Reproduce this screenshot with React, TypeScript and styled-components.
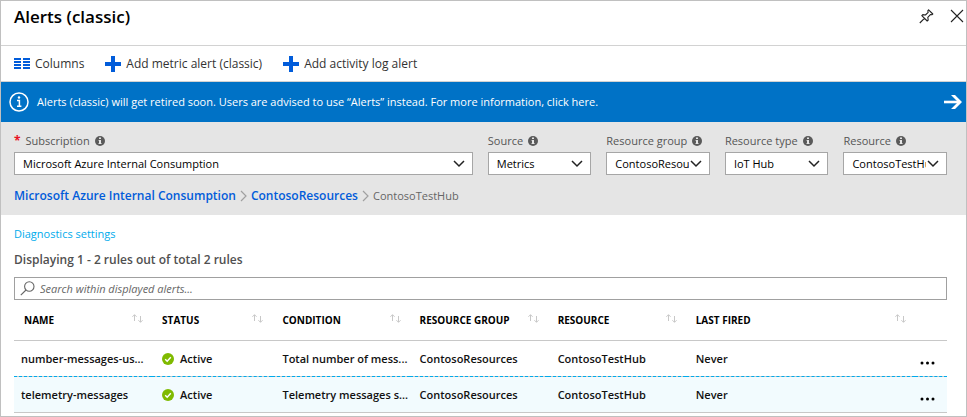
import React, { useState } from 'react';
import styled, { createGlobalStyle } from 'styled-components';

const GlobalStyle = createGlobalStyle`
  *, *::before, *::after { box-sizing: border-box; }
  body {
    margin: 0;
    background: #fff;
    color: #000;
    font-family: "Open Sans", "Noto Sans", sans-serif;
    font-size: 11px;
    line-height: 16px;
  }
  button, input, select { font: inherit; color: inherit; }
  button { border: 0; padding: 0; background: none; cursor: pointer; }
  a { text-decoration: none; }
  svg { display: block; flex: none; }
`;

const Blade = styled.main`
  border: 1px solid #c0c0c0;
  background: #fff;
  padding-bottom: 3px;
`;

const Header = styled.header`
  display: flex;
  align-items: flex-start;
  justify-content: space-between;
  height: 45px;
  padding: 4px 2px 0 13px;
  border-bottom: 1px solid #d2d2d2;
`;

const Title = styled.h1`
  margin: 0;
  font-size: 17px;
  line-height: 24px;
  font-weight: 600;
`;

const WindowButtons = styled.div`
  display: flex;
  gap: 16px;
  padding-top: 4px;
`;

const IconButton = styled.button`
  display: flex;
  color: #222;
`;

const Toolbar = styled.div`
  display: flex;
  align-items: center;
  gap: 21px;
  height: 36px;
  padding: 0 13px;
  border-bottom: 1px solid #d2d2d2;
`;

const ToolButton = styled.button`
  display: flex;
  align-items: center;
  gap: 5px;
  color: #333;
  font-size: 12px;
`;

const Banner = styled.a`
  display: flex;
  align-items: center;
  gap: 8px;
  height: 40px;
  padding: 0 4px 0 8px;
  background: #0072c6;
  color: #fff;
`;

const BannerText = styled.span`
  flex: 1;
`;

const FilterPanel = styled.section`
  background: #e5e5e5;
  padding: 11px 19px 11px 13px;
`;

const Filters = styled.div`
  display: grid;
  grid-template-columns: minmax(0, 443fr) repeat(4, minmax(0, 100fr));
  gap: 15px;
`;

const Field = styled.div`
  display: flex;
  flex-direction: column;
  gap: 3px;
`;

const FieldLabel = styled.label`
  display: flex;
  align-items: center;
  gap: 5px;
  color: #555;
  white-space: nowrap;
`;

const Required = styled.span`
  color: #e81123;
  font-size: 12px;
  font-weight: 700;
`;

const SelectBox = styled.div`
  display: grid;
  align-items: center;
  height: 23px;
  border: 1px solid #a6a6a6;
  background: #fff;

  & > * { grid-area: 1 / 1; }
  & > svg {
    justify-self: end;
    margin-right: 7px;
    pointer-events: none;
  }
`;

const Select = styled.select`
  appearance: none;
  width: 100%;
  height: 21px;
  margin: 0;
  padding: 0 20px 0 8px;
  border: 0;
  border-radius: 0;
  background: transparent;
  overflow: hidden;
  text-overflow: clip;
`;

const Breadcrumb = styled.nav`
  display: flex;
  align-items: center;
  gap: 4px;
  margin-top: 13px;
  color: #666;
`;

const Crumb = styled.a`
  color: #015cda;
  font-size: 12px;
  font-weight: 600;
`;

const Content = styled.section`
  padding: 11px 19px 0 13px;
`;

const SettingsLink = styled.a`
  display: block;
  width: fit-content;
  color: #00abec;
`;

const Summary = styled.p`
  margin: 10px 0 9px;
  color: #505050;
  font-size: 12px;
  font-weight: 600;
`;

const SearchBox = styled.label`
  display: flex;
  align-items: center;
  gap: 5px;
  height: 23px;
  padding-left: 5px;
  border: 1px solid #a0a0a0;
`;

const SearchInput = styled.input`
  flex: 1;
  height: 21px;
  padding: 0;
  border: 0;
  outline: 0;
  background: transparent;
  &::placeholder { color: #666; font-style: italic; opacity: 1; }
`;

const Table = styled.table`
  width: 100%;
  table-layout: fixed;
  border-collapse: separate;
  border-spacing: 0;
`;

const Col = styled.col<{ $share: number }>`
  width: ${(p) => p.$share}%;
`;

const HeadCell = styled.th`
  height: 41px;
  padding: 0 8px 0 10px;
  border-bottom: 1px solid #c8c8c8;
  font-size: 10px;
  font-weight: 700;
  text-align: left;
`;

const SortButton = styled.button`
  display: flex;
  align-items: center;
  justify-content: space-between;
  width: 100%;
  white-space: nowrap;

  & > svg { margin-bottom: 4px; }
`;

const Row = styled.tr<{ $selected?: boolean }>`
  background: ${(p) => (p.$selected ? '#f2fbfe' : '#fff')};
  & > td {
    border-bottom: 1px solid #c8c8c8;
  }
  &:not(:last-child) > td {
    border-bottom: 1px dashed #00abec;
    background: linear-gradient(#c8c8c8, #c8c8c8) bottom / 100% 1px no-repeat border-box;
  }
`;

const Cell = styled.td<{ $first?: boolean }>`
  height: 36px;
  padding: 0 0 0 ${(p) => (p.$first ? 7 : 10)}px;
  font-weight: 600;
  color: #111;
  white-space: nowrap;
`;

const Status = styled.span`
  display: flex;
  align-items: center;
  gap: 6px;
`;

const MoreCell = styled.td`
  padding: 8px 0 0 5px;
`;

const Columns = () => (
  <svg width="16" height="12" viewBox="0 0 16 12" fill="#015cda" aria-hidden="true">
    <path d="M0 0h7v2H0zM0 3h7v2H0zM0 6h7v2H0zM0 9h7v2H0zM9 0h7v2H9zM9 3h7v2H9zM9 6h7v2H9zM9 9h7v2H9z" />
  </svg>
);

const Plus = () => (
  <svg width="16" height="16" viewBox="0 0 16 16" fill="#015cda" aria-hidden="true">
    <path d="M6 0h4v6h6v4h-6v6H6v-6H0V6h6z" />
  </svg>
);

const Pin = () => (
  <svg width="15" height="15" viewBox="0 0 15 15" fill="none" stroke="currentColor" strokeWidth="1.1" strokeLinejoin="round" aria-hidden="true">
    <path d="M9.6.8 13.8 5 12.8 5.8 11.4 5.6 8.8 8.4 9.2 11 8.2 12 2.8 6.6 3.8 5.6 6.4 6 9.2 3.4 8.8 1.8zM5.4 9.4.8 14" />
  </svg>
);

const Close = () => (
  <svg width="14" height="14" viewBox="0 0 14 14" fill="none" stroke="currentColor" strokeWidth="1.1" aria-hidden="true">
    <path d="M1 1l12 12M13 1L1 13" />
  </svg>
);

const InfoRing = () => (
  <svg width="20" height="20" viewBox="0 0 20 20" fill="none" stroke="#fff" strokeWidth="1.5" aria-hidden="true">
    <circle cx="10" cy="10" r="9" />
    <path d="M8 8.6h2.4v5.4M8 14.2h4.4" />
    <circle cx="10" cy="5.5" r="1.2" fill="#fff" stroke="none" />
  </svg>
);

const BannerArrow = () => (
  <svg width="18" height="14" viewBox="0 0 18 14" fill="none" stroke="#fff" strokeWidth="2.6" aria-hidden="true">
    <path d="M0 7h15" />
    <path d="M7 0h4l7 7-7 7H7l7-7z" fill="#fff" stroke="none" />
  </svg>
);

const InfoDot = () => (
  <svg width="10" height="10" viewBox="0 0 10 10" aria-hidden="true">
    <circle cx="5" cy="5" r="5" fill="#5a5a5a" />
    <path d="M4 1.5h2v1.5H4zM3.5 4H6v3.2h.7V8H3.4v-.8H4V4.8h-.5z" fill="#e5e5e5" />
  </svg>
);

const Chevron = () => (
  <svg width="12" height="8" viewBox="0 0 12 8" fill="none" stroke="#222" strokeWidth="1.5" aria-hidden="true">
    <path d="M1 1l5 5 5-5" />
  </svg>
);

const CrumbChevron = () => (
  <svg width="7" height="12" viewBox="0 0 7 12" fill="none" stroke="#a0a0a0" strokeWidth="1.2" aria-hidden="true">
    <path d="M1 1l5 5-5 5" />
  </svg>
);

const Magnifier = () => (
  <svg width="15" height="15" viewBox="0 0 15 15" fill="none" stroke="#666" strokeWidth="1.1" aria-hidden="true">
    <circle cx="9.3" cy="5.5" r="4.7" />
    <path d="M6 9L.8 14.2" />
  </svg>
);

const SortArrows = () => (
  <svg width="12" height="9" viewBox="0 0 12 9" fill="none" stroke="#c8c8c8" aria-hidden="true">
    <path d="M2.5 7V.8M.4 2.8 2.5.7l2.1 2.1M8.5 2v6.2M6.4 6.2l2.1 2.1 2.1-2.1" />
  </svg>
);

const CheckBadge = () => (
  <svg width="12" height="12" viewBox="0 0 12 12" aria-hidden="true">
    <circle cx="6" cy="6" r="6" fill="#7fba00" />
    <path d="M3.2 6.2l2 2 3.6-4" fill="none" stroke="#fff" strokeWidth="1.4" />
  </svg>
);

const Dots = () => (
  <svg width="15" height="4" viewBox="0 0 15 4" aria-hidden="true">
    <circle cx="2" cy="2" r="1.5" />
    <circle cx="7.5" cy="2" r="1.5" />
    <circle cx="13" cy="2" r="1.5" />
  </svg>
);

const filters = [
  { id: 'subscription', label: 'Subscription', value: 'Microsoft Azure Internal Consumption', required: true },
  { id: 'source', label: 'Source', value: 'Metrics' },
  { id: 'group', label: 'Resource group', value: 'ContosoResources' },
  { id: 'type', label: 'Resource type', value: 'IoT Hub' },
  { id: 'resource', label: 'Resource', value: 'ContosoTestHub' },
];

const headings = ['NAME', 'STATUS', 'CONDITION', 'RESOURCE GROUP', 'RESOURCE', 'LAST FIRED'];
const shares = [14.8, 12.9, 14.7, 14.8, 14.8, 24.6, 3.4];

const rules = [
  { name: 'number-messages-us...', condition: 'Total number of mess...' },
  { name: 'telemetry-messages', condition: 'Telemetry messages s...' },
];

export default function App() {
  const [query, setQuery] = useState('');
  return (
    <>
      <GlobalStyle />
      <Blade>
        <Header>
          <Title>Alerts (classic)</Title>
          <WindowButtons>
            <IconButton aria-label="Pin"><Pin /></IconButton>
            <IconButton aria-label="Close"><Close /></IconButton>
          </WindowButtons>
        </Header>
        <Toolbar>
          <ToolButton><Columns />Columns</ToolButton>
          <ToolButton><Plus />Add metric alert (classic)</ToolButton>
          <ToolButton><Plus />Add activity log alert</ToolButton>
        </Toolbar>
        <Banner href="#alerts">
          <InfoRing />
          <BannerText>
            Alerts (classic) will get retired soon. Users are advised to use “Alerts” instead. For more information, click here.
          </BannerText>
          <BannerArrow />
        </Banner>
        <FilterPanel>
          <Filters>
            {filters.map((f) => (
              <Field key={f.id}>
                <FieldLabel htmlFor={f.id}>
                  {f.required && <Required>*</Required>}
                  {f.label}
                  <InfoDot />
                </FieldLabel>
                <SelectBox>
                  <Select id={f.id}>
                    <option>{f.value}</option>
                  </Select>
                  <Chevron />
                </SelectBox>
              </Field>
            ))}
          </Filters>
          <Breadcrumb aria-label="Breadcrumb">
            <Crumb href="#subscription">Microsoft Azure Internal Consumption</Crumb>
            <CrumbChevron />
            <Crumb href="#group">ContosoResources</Crumb>
            <CrumbChevron />
            <span>ContosoTestHub</span>
          </Breadcrumb>
        </FilterPanel>
        <Content>
          <SettingsLink href="#diagnostics">Diagnostics settings</SettingsLink>
          <Summary>Displaying 1 - 2 rules out of total 2 rules</Summary>
          <SearchBox>
            <Magnifier />
            <SearchInput
              type="text"
              aria-label="Search within displayed alerts"
              placeholder="Search within displayed alerts..."
              value={query}
              onChange={(e) => setQuery(e.target.value)}
            />
          </SearchBox>
          <Table>
            <colgroup>
              {shares.map((share, i) => <Col key={i} $share={share} />)}
            </colgroup>
            <thead>
              <tr>
                {headings.map((h) => (
                  <HeadCell key={h}>
                    <SortButton>{h}<SortArrows /></SortButton>
                  </HeadCell>
                ))}
                <HeadCell aria-label="Actions" />
              </tr>
            </thead>
            <tbody>
              {rules.map((r, i) => (
                <Row key={r.name} $selected={i === 1}>
                  <Cell $first>{r.name}</Cell>
                  <Cell><Status><CheckBadge />Active</Status></Cell>
                  <Cell>{r.condition}</Cell>
                  <Cell>ContosoResources</Cell>
                  <Cell>ContosoTestHub</Cell>
                  <Cell>Never</Cell>
                  <MoreCell>
                    <IconButton aria-label="More actions"><Dots /></IconButton>
                  </MoreCell>
                </Row>
              ))}
            </tbody>
          </Table>
        </Content>
      </Blade>
    </>
  );
}
